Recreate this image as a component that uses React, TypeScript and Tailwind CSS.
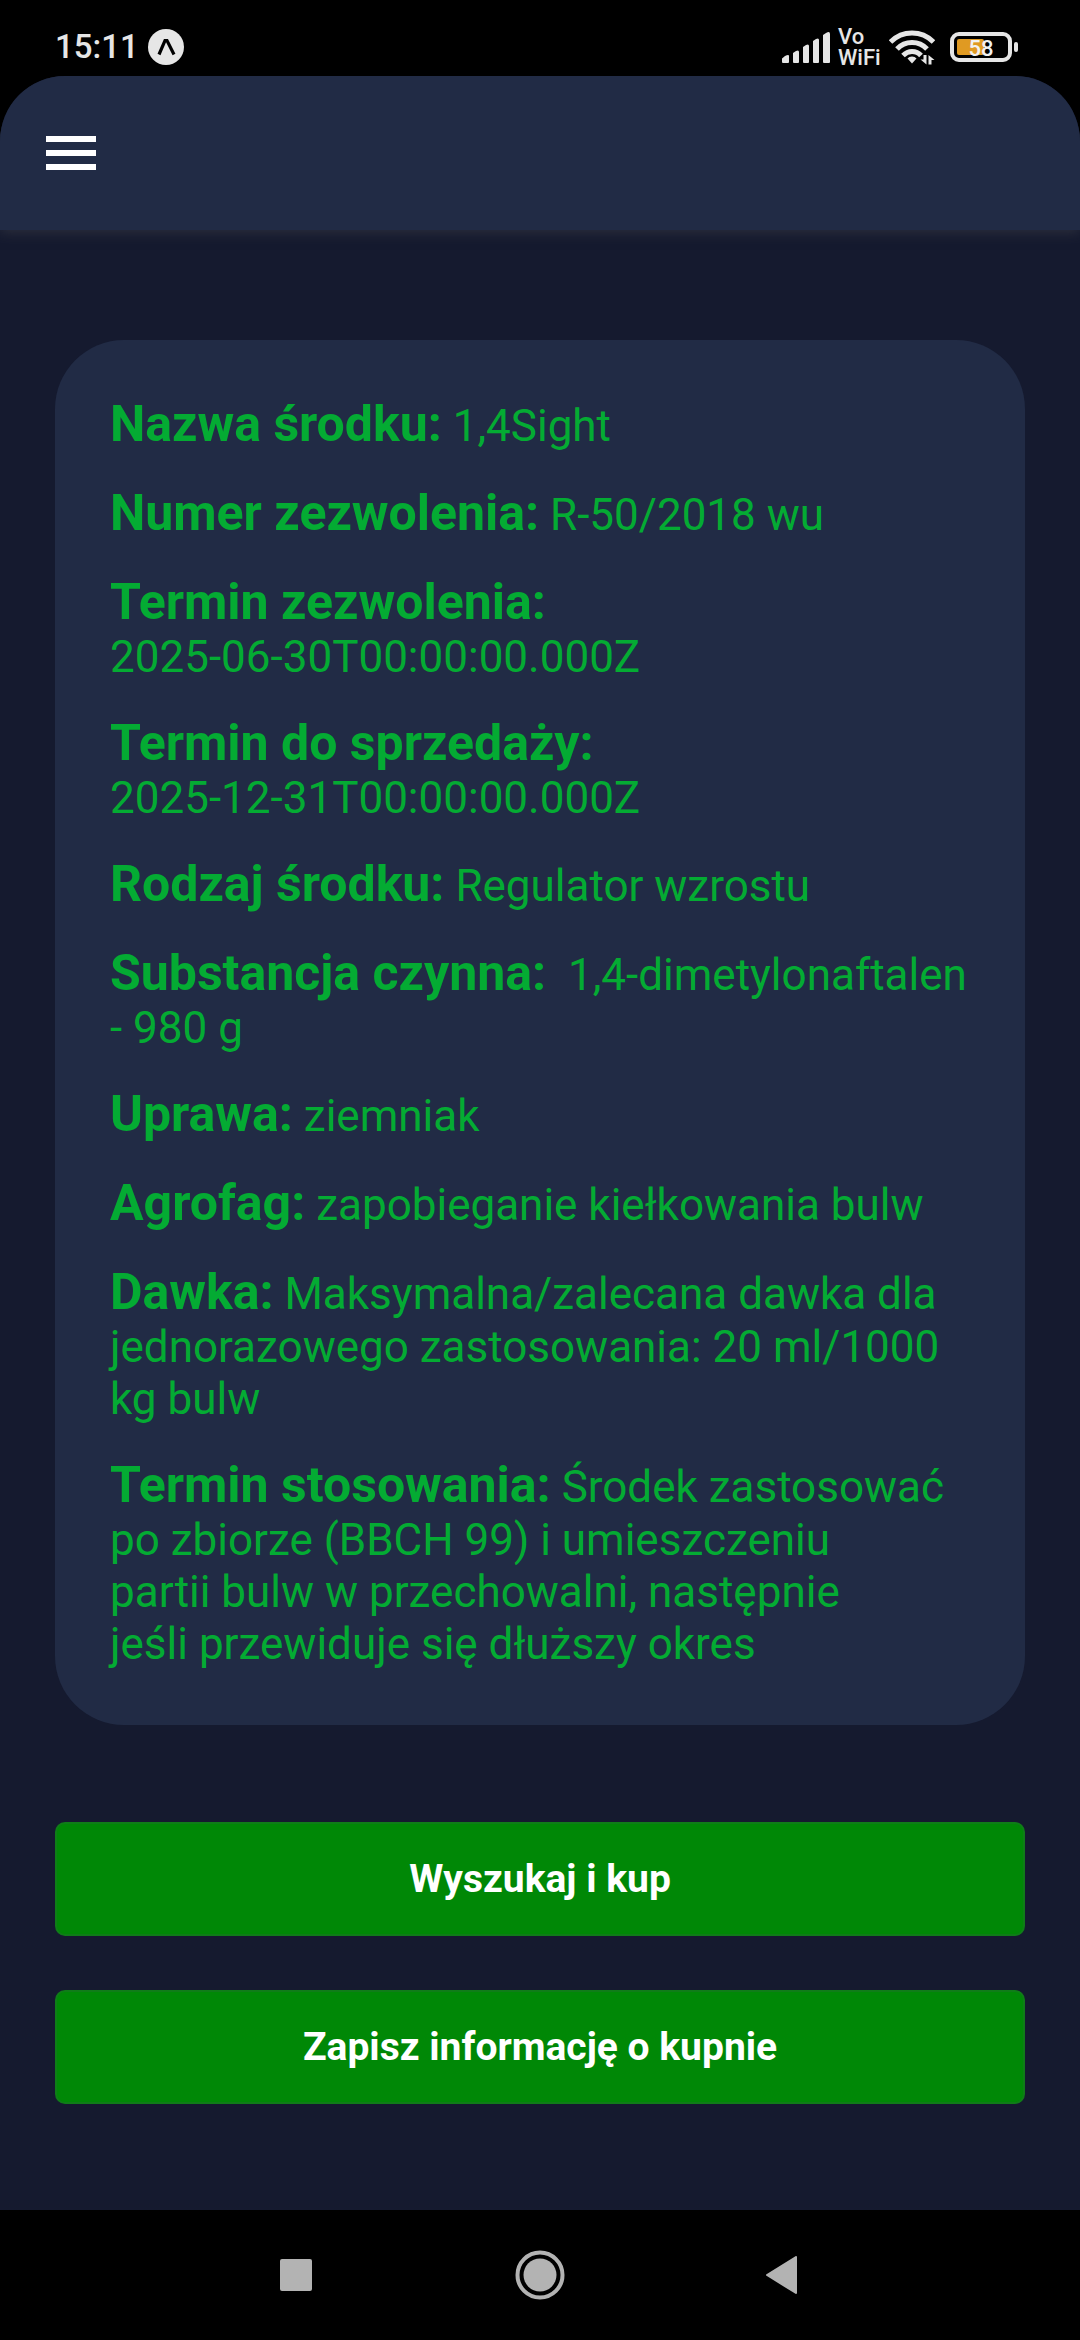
import React from "react";

type Field = { label: string; value: string; unbroken?: boolean };

const fields: Field[] = [
  { label: "Nazwa środku:", value: "1,4Sight" },
  { label: "Numer zezwolenia:", value: "R-50/2018 wu" },
  { label: "Termin zezwolenia:", value: "2025-06-30T00:00:00.000Z", unbroken: true },
  { label: "Termin do sprzedaży:", value: "2025-12-31T00:00:00.000Z", unbroken: true },
  { label: "Rodzaj środku:", value: "Regulator wzrostu" },
  { label: "Substancja czynna:", value: "\u00a01,4-dimetylonaftalen - 980 g" },
  { label: "Uprawa:", value: "ziemniak" },
  { label: "Agrofag:", value: "zapobieganie kiełkowania bulw" },
  {
    label: "Dawka:",
    value: "Maksymalna/zalecana dawka dla jednorazowego zastosowania: 20 ml/1000 kg bulw",
  },
  {
    label: "Termin stosowania:",
    value:
      "Środek zastosować\npo zbiorze (BBCH 99) i umieszczeniu\npartii bulw w przechowalni, następnie\njeśli przewiduje się dłuższy okres",
  },
];

function SignalIcon() {
  return (
    <svg width="48" height="32" viewBox="0 0 48 32" fill="#e6e6e6" aria-hidden="true">
      <path d="M0 31v-3.500l3-2.500q4-2 4 0v6q0 1-1 1h-5q-1 0-1-1z" />
      <path d="M11 22l3-2q3-1.500 3 1v10q0 1-1 1h-4q-1 0-1-1z" />
      <path d="M21 16l3-2q3-1.500 3 1v16q0 1-1 1h-4q-1 0-1-1z" />
      <path d="M31 10l3-2q3-1.500 3 1v22q0 1-1 1h-4q-1 0-1-1z" />
      <path d="M41 4l3-2q4-2.500 4 1v28q0 1-1 1h-5q-1 0-1-1z" />
    </svg>
  );
}

function WifiIcon() {
  return (
    <svg width="46" height="35" viewBox="0 0 46 35" fill="none" aria-hidden="true">
      <g stroke="#e6e6e6" strokeWidth="5">
        <path d="M1.500 12Q10.500 3 23 3T44.500 12" />
        <path d="M8 19Q14 12.500 23 12.500T38 19" />
        <path d="M14 25.500Q18 21.500 23 21.500Q28.500 21.500 32 25.500" />
      </g>
      <path d="M23 26.500q3 0 4.500 2l-4.500 5-4.500-5q1.500-2 4.500-2z" fill="#e6e6e6" />
      <path d="M37.500 25V34.500L31.500 29.500h3V25zM39.500 34.500V25L45.500 30h-3v4.500z" fill="#e6e6e6" />
    </svg>
  );
}

function StatusBar() {
  return (
    <div className="flex h-[76px] items-center justify-between bg-black pt-[18px] pr-[62px] pl-[55px] text-[#e6e6e6]">
      <div className="flex items-center gap-[9px]">
        <span className="text-[33px] leading-[40px] font-medium">15:11</span>
        <svg width="36" height="36" viewBox="0 0 36 36" aria-hidden="true">
          <circle cx="18" cy="18" r="18" fill="#e6e6e6" />
          <path d="M11 25.500L17 11.500h2L26 25.500" fill="none" stroke="#000" strokeWidth="3.200" />
        </svg>
      </div>
      <div className="flex items-center">
        <SignalIcon />
        <span className="ml-[8px] flex w-[43px] flex-col text-[22px] leading-[21px] font-medium">
          <span>Vo</span>
          <span>WiFi</span>
        </span>
        <span className="ml-[8px]">
          <WifiIcon />
        </span>
        <svg className="ml-[15px]" width="68" height="30" viewBox="0 0 68 30" aria-hidden="true">
          <rect x="2" y="2" width="58" height="26" rx="7" fill="none" stroke="#e6e6e6" strokeWidth="4" />
          <rect x="7" y="7" width="27" height="16" rx="2" fill="#e09a22" />
          <rect x="64" y="10" width="4" height="10" rx="2" fill="#e6e6e6" />
          <text x="31" y="24" textAnchor="middle" fontSize="22" fontWeight="500" fill="#f2f2f2">
            58
          </text>
        </svg>
      </div>
    </div>
  );
}

function ActionButton({ children }: { children: React.ReactNode }) {
  return (
    <button
      type="button"
      className="h-[114px] w-full rounded-[10px] border-2 border-[#0f7d18] bg-[#008806] text-[39px] leading-[46px] font-bold text-white"
    >
      {children}
    </button>
  );
}

export default function App() {
  return (
    <div className="flex min-h-screen flex-col bg-black font-['Roboto',sans-serif]">
      <StatusBar />
      <div className="flex flex-1 flex-col overflow-hidden rounded-t-[65px] bg-[#151a2f]">
        <header className="flex h-[154px] items-center bg-[#212b45] pl-[46px] shadow-[0_2px_12px_rgba(70,70,75,0.5)]">
          <button type="button" aria-label="Menu" className="flex w-[50px] flex-col gap-[8px]">
            <span className="h-[6px] bg-white" />
            <span className="h-[6px] bg-white" />
            <span className="h-[6px] bg-white" />
          </button>
        </header>
        <main className="flex flex-col px-[55px] pt-[110px]">
          <section className="flex flex-col gap-[31px] rounded-[69px] bg-[#212b45] px-[55px] pt-[55px] pb-[55px] text-[44px] text-[#04ab33]">
            {fields.map((f) => (
              <p key={f.label} className="leading-[normal] whitespace-pre-wrap">
                <strong className="text-[50px] font-bold">{f.label}</strong>{" "}
                <span className={f.unbroken ? "inline-block whitespace-nowrap" : undefined}>{f.value}</span>
              </p>
            ))}
          </section>
          <div className="mt-[97px] flex flex-col gap-[54px]">
            <ActionButton>Wyszukaj i kup</ActionButton>
            <ActionButton>Zapisz informację o kupnie</ActionButton>
          </div>
        </main>
      </div>
      <nav className="flex h-[130px] items-center justify-center gap-[180px] bg-black">
        <button type="button" aria-label="Ostatnie" className="flex w-[64px] justify-center">
          <span className="size-[32px] rounded-[2px] bg-[#b3b3b3]" />
        </button>
        <button type="button" aria-label="Ekran główny" className="flex w-[64px] justify-center">
          <svg width="50" height="50" viewBox="0 0 50 50" aria-hidden="true">
            <circle cx="25" cy="25" r="22.500" fill="none" stroke="#b3b3b3" strokeWidth="4" />
            <circle cx="25" cy="25" r="16.500" fill="#b3b3b3" />
          </svg>
        </button>
        <button type="button" aria-label="Wstecz" className="flex w-[64px] justify-center">
          <svg width="38" height="38" viewBox="0 0 38 38" aria-hidden="true">
            <path d="M2 19L31 1v36z" fill="#b3b3b3" stroke="#b3b3b3" strokeWidth="2" strokeLinejoin="round" />
          </svg>
        </button>
      </nav>
    </div>
  );
}
